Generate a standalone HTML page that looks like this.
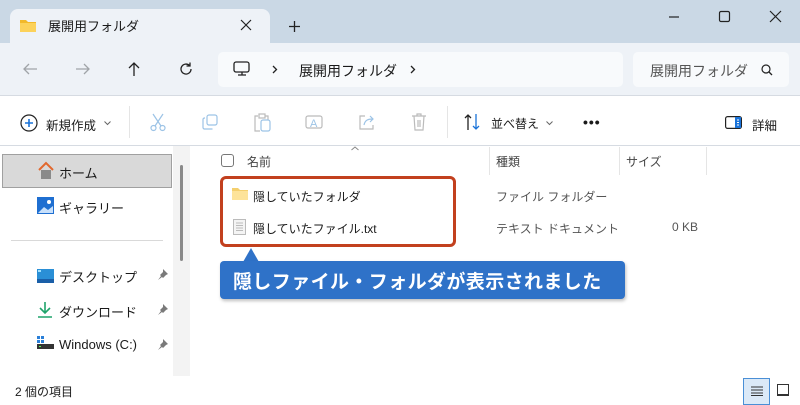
<!DOCTYPE html>
<html><head><meta charset="utf-8"><style>
*{margin:0;padding:0;box-sizing:border-box}
body{width:800px;height:405px;overflow:hidden;background:#fff;font-family:"Liberation Sans","Noto Sans CJK JP",sans-serif;color:#1a1a1a;position:relative;font-size:12px}
.a{position:absolute;white-space:nowrap}
svg{position:absolute;overflow:visible}
</style></head><body>
<div class="a" style="left:0;top:0;width:800px;height:43px;background:#cad8e5"></div>
<div class="a" style="left:10px;top:9px;width:260px;height:36px;background:#eef2f7;border-radius:8px 8px 0 0"></div>
<div class="a" style="left:0;top:43px;width:800px;height:53px;background:#eef2f7;border-bottom:1px solid #d6dbe2"></div>
<svg style="left:20px;top:19px" width="16" height="13"><path d="M0 1h6l2 2h8v10H0z" fill="#f2b92a"/><path d="M0 4h16v9H0z" fill="#fcd25a"/></svg>
<div class="a" style="left:48px;top:16px;font-size:13px">展開用フォルダ</div>
<svg style="left:241px;top:20px" width="10" height="10"><path d="M0 0L10 10M10 0L0 10" stroke="#222" stroke-width="1.2"/></svg>
<svg style="left:289px;top:21px" width="11" height="11"><path d="M5.5 0v11M0 5.5h11" stroke="#222" stroke-width="1.3"/></svg>
<svg style="left:669px;top:16px" width="10" height="2"><path d="M0 1h10" stroke="#222" stroke-width="1.2"/></svg>
<svg style="left:719px;top:11px" width="11" height="11"><rect x=".5" y=".5" width="10" height="10" rx="1.5" fill="none" stroke="#222" stroke-width="1.2"/></svg>
<svg style="left:770px;top:11px" width="11" height="11"><path d="M0 0L11 11M11 0L0 11" stroke="#222" stroke-width="1.2"/></svg>
<svg style="left:23px;top:63px" width="14" height="12"><path d="M14 6H1M6 1L1 6l5 5" fill="none" stroke="#a0a4a8" stroke-width="1.3"/></svg>
<svg style="left:76px;top:63px" width="14" height="12"><path d="M0 6h13M8 1l5 5-5 5" fill="none" stroke="#a0a4a8" stroke-width="1.3"/></svg>
<svg style="left:128px;top:62px" width="12" height="14"><path d="M6 14V1M1 6l5-5 5 5" fill="none" stroke="#222" stroke-width="1.3"/></svg>
<svg style="left:179px;top:62px" width="14" height="14"><path d="M12 7A5 5 0 1 1 10.5 3.5M11 0.5v3.5h-3.5" fill="none" stroke="#222" stroke-width="1.3"/></svg>
<div class="a" style="left:218px;top:52px;width:405px;height:35px;background:#f8fafc;border-radius:5px"></div>
<svg style="left:233px;top:61px" width="18" height="16"><rect x="1" y="1" width="15" height="10" rx="2" fill="none" stroke="#222" stroke-width="1.3"/><path d="M5 14h8M9 11v3" stroke="#222" stroke-width="1.3"/></svg>
<svg style="left:272px;top:65px" width="6" height="9"><path d="M1 1l3.5 3.5L1 8" fill="none" stroke="#222" stroke-width="1.3"/></svg>
<div class="a" style="left:299px;top:61px;font-size:14px">展開用フォルダ</div>
<svg style="left:410px;top:65px" width="6" height="9"><path d="M1 1l3.5 3.5L1 8" fill="none" stroke="#222" stroke-width="1.3"/></svg>
<div class="a" style="left:633px;top:52px;width:156px;height:35px;background:#f8fafc;border-radius:5px"></div>
<div class="a" style="left:650px;top:61px;font-size:14px;color:#555">展開用フォルダ</div>
<svg style="left:761px;top:64px" width="12" height="12"><circle cx="5" cy="5" r="4" fill="none" stroke="#222" stroke-width="1.2"/><path d="M8 8l3 3" stroke="#222" stroke-width="1.3"/></svg>
<!-- toolbar -->
<svg style="left:20px;top:114px" width="18" height="18"><circle cx="9" cy="9" r="8" fill="none" stroke="#222" stroke-width="1.2"/><path d="M9 5v8M5 9h8" stroke="#1a73d9" stroke-width="1.6"/></svg>
<div class="a" style="left:46px;top:115px;font-size:12.5px">新規作成</div>
<svg style="left:104px;top:121px" width="7" height="4"><path d="M.5.5l3 3 3-3" fill="none" stroke="#666"/></svg>
<div class="a" style="left:129px;top:106px;width:1px;height:32px;background:#e5e5e5"></div>
<svg style="left:150px;top:114px" width="16" height="18" fill="none" stroke="#9cc3e6" stroke-width="1.2"><path d="M3 0l8 12M13 0L5 12"/><circle cx="3.5" cy="14" r="2.5"/><circle cx="12.5" cy="14" r="2.5"/></svg>
<svg style="left:202px;top:114px" width="16" height="16" fill="none" stroke="#9cc3e6" stroke-width="1.2"><rect x="5" y="1" width="10" height="10" rx="2"/><path d="M3 4H2.5A1.5 1.5 0 0 0 1 5.5v8A1.5 1.5 0 0 0 2.5 15h8"/></svg>
<svg style="left:254px;top:113px" width="16" height="19" fill="none" stroke="#bbb" stroke-width="1.2"><path d="M4 3H1v15h5"/><rect x="5" y="1" width="6" height="4"/><path d="M11 3h3v4"/><rect x="7" y="7" width="9" height="11" rx="2" stroke="#9cc3e6"/></svg>
<svg style="left:305px;top:113px" width="18" height="18" fill="none" stroke="#bbb" stroke-width="1.2"><rect x="1" y="3" width="16" height="12" rx="2"/><text x="5" y="14" font-size="11" fill="#9cc3e6" stroke="none" font-family="Liberation Sans">A</text></svg>
<svg style="left:358px;top:114px" width="18" height="16" fill="none" stroke="#bbb" stroke-width="1.2"><path d="M7 2H2v13h13v-4"/><path d="M6 11c1-5 4-6 9-6M12 2l3 3-3 3" stroke="#9cc3e6"/></svg>
<svg style="left:411px;top:113px" width="16" height="18" fill="none" stroke="#bbb" stroke-width="1.2"><path d="M1 3h14M6 3V1h4v2M3 3l1 14h8l1-14M7 7v7M9 7v7"/></svg>
<div class="a" style="left:447px;top:106px;width:1px;height:32px;background:#e5e5e5"></div>
<svg style="left:464px;top:114px" width="18" height="16" fill="none" stroke-width="1.3"><path d="M4 16V1M1 4l3-3 3 3" stroke="#222"/><path d="M12 0v15M9 12l3 3 3-3" stroke="#1a73d9"/></svg>
<div class="a" style="left:491px;top:115px;font-size:12px">並べ替え</div>
<svg style="left:546px;top:121px" width="7" height="4"><path d="M.5.5l3 3 3-3" fill="none" stroke="#666"/></svg>
<div class="a" style="left:583px;top:114px;font-size:14px;letter-spacing:1px;font-weight:bold">•••</div>
<svg style="left:725px;top:116px" width="17" height="13"><rect x=".6" y=".6" width="15.8" height="11.8" rx="2" fill="none" stroke="#222" stroke-width="1.2"/><rect x="10" y="1" width="6" height="11" fill="#1a73d9"/><path d="M12 4h2M12 6.5h2M12 9h2" stroke="#fff"/></svg>
<div class="a" style="left:752px;top:115px;font-size:12.5px">詳細</div>
<div class="a" style="left:0;top:145px;width:800px;height:1px;background:#d6dbe2"></div>
<!-- sidebar -->
<div class="a" style="left:173px;top:146px;width:17px;height:230px;background:#f3f3f3"></div>
<div class="a" style="left:180px;top:165px;width:3px;height:96px;background:#8a8a8a;border-radius:2px"></div>
<div class="a" style="left:2px;top:154px;width:170px;height:34px;background:#d9d9d9;border:1px solid #a0a0a0"></div>
<svg style="left:37px;top:162px" width="18" height="17"><path d="M2 8L9 1l7 7" fill="none" stroke="#e2682e" stroke-width="2"/><path d="M4 8v9h10V8" fill="#8a8a8a"/></svg>
<div class="a" style="left:59px;top:163px;font-size:13px">ホーム</div>
<svg style="left:37px;top:197px" width="17" height="17"><rect x="0" y="0" width="17" height="17" fill="#1f6fd1"/><path d="M1 16l6-6 4 3 5-4v7z" fill="#c8e0fb"/><circle cx="12" cy="5" r="2" fill="#fff"/></svg>
<div class="a" style="left:59px;top:198px;font-size:13px">ギャラリー</div>
<div class="a" style="left:11px;top:240px;width:152px;height:1px;background:#d9d9d9"></div>
<svg style="left:37px;top:269px" width="17" height="14"><rect width="17" height="14" fill="#2a8fd6"/><rect x="0" y="10" width="17" height="4" fill="#1a5fa8"/><rect x="1" y="1" width="3" height="2" fill="#9fe1ff"/></svg>
<div class="a" style="left:59px;top:267px;font-size:13px">デスクトップ</div>
<svg style="left:38px;top:302px" width="14" height="16"><path d="M7 0v11M2 6l5 5 5-5M0 15h14" fill="none" stroke="#1fa36b" stroke-width="1.6"/></svg>
<div class="a" style="left:59px;top:302px;font-size:13px">ダウンロード</div>
<svg style="left:37px;top:336px" width="17" height="14"><rect x="0" y="0" width="3" height="3" fill="#2a7fd8"/><rect x="4" y="0" width="3" height="3" fill="#2a7fd8"/><rect x="0" y="4" width="3" height="3" fill="#2a7fd8"/><rect x="4" y="4" width="3" height="3" fill="#2a7fd8"/><rect x="0" y="8" width="17" height="5" fill="#333"/><rect x="2" y="10" width="2" height="1" fill="#5f5"/></svg>
<div class="a" style="left:59px;top:337px;font-size:13px">Windows (C:)</div>
<svg style="left:157px;top:269px" width="11" height="11"><path d="M6 0l5 5-2 1-3 3-1-1-4 3 3-4-1-1 3-3z" fill="#7a7a7a"/></svg>
<svg style="left:157px;top:304px" width="11" height="11"><path d="M6 0l5 5-2 1-3 3-1-1-4 3 3-4-1-1 3-3z" fill="#7a7a7a"/></svg>
<svg style="left:157px;top:339px" width="11" height="11"><path d="M6 0l5 5-2 1-3 3-1-1-4 3 3-4-1-1 3-3z" fill="#7a7a7a"/></svg>
<!-- content -->
<svg style="left:351px;top:146px" width="8" height="5"><path d="M.5 4l3.5-3 3.5 3" fill="none" stroke="#888"/></svg>
<div class="a" style="left:221px;top:154px;width:13px;height:13px;border:1px solid #777;border-radius:3px"></div>
<div class="a" style="left:247px;top:153px;font-size:12px;color:#444">名前</div>
<div class="a" style="left:489px;top:147px;width:1px;height:28px;background:#e5e5e5"></div>
<div class="a" style="left:496px;top:153px;font-size:12px;color:#444">種類</div>
<div class="a" style="left:619px;top:147px;width:1px;height:28px;background:#e5e5e5"></div>
<div class="a" style="left:626px;top:153px;font-size:12px;color:#444">サイズ</div>
<div class="a" style="left:706px;top:147px;width:1px;height:28px;background:#e5e5e5"></div>
<div class="a" style="left:220px;top:176px;width:236px;height:71px;border:3px solid #c2401e;border-radius:6px"></div>
<svg style="left:232px;top:187px" width="16" height="13"><path d="M0 1h6l2 2h8v10H0z" fill="#f4cf6e"/><path d="M0 4h16v9H0z" fill="#fde39a"/></svg>
<div class="a" style="left:253px;top:188px;font-size:12px">隠していたフォルダ</div>
<svg style="left:233px;top:219px" width="13" height="16"><path d="M.5.5h12v15H.5z" fill="#f4f4f4" stroke="#bbb"/><path d="M3 4h7M3 6.5h7M3 9h7M3 11.5h7" stroke="#bbb"/></svg>
<div class="a" style="left:253px;top:220px;font-size:12px">隠していたファイル.txt</div>
<div class="a" style="left:496px;top:188px;font-size:12px;color:#555">ファイル フォルダー</div>
<div class="a" style="left:496px;top:220px;font-size:12px;color:#555">テキスト ドキュメント</div>
<div class="a" style="left:672px;top:220px;font-size:12px;color:#555">0 KB</div>
<svg style="left:240px;top:248px" width="24" height="14"><path d="M3 14L11 0l8 14z" fill="#2f72c8"/></svg>
<div class="a" style="left:220px;top:261px;width:405px;height:38px;background:#2f72c8;border-radius:4px;box-shadow:1px 2px 3px rgba(0,0,0,.25)"></div>
<div class="a" style="left:233px;top:267px;font-size:19px;font-weight:bold;color:#fff;letter-spacing:0.4px">隠しファイル・フォルダが表示されました</div>
<!-- status -->
<div class="a" style="left:15px;top:383px;font-size:12px">2 個の項目</div>
<div class="a" style="left:743px;top:378px;width:27px;height:27px;background:#dbe9f7;border:1px solid #4a8fd6"></div>
<svg style="left:751px;top:386px" width="12" height="10"><path d="M0 1h12M0 4h12M0 7h12M0 9.5h12" stroke="#333"/></svg>
<svg style="left:777px;top:384px" width="12" height="12"><rect x=".5" y=".5" width="11" height="10" fill="none" stroke="#333"/><path d="M0 11.5h12" stroke="#333"/></svg>
</body></html>
